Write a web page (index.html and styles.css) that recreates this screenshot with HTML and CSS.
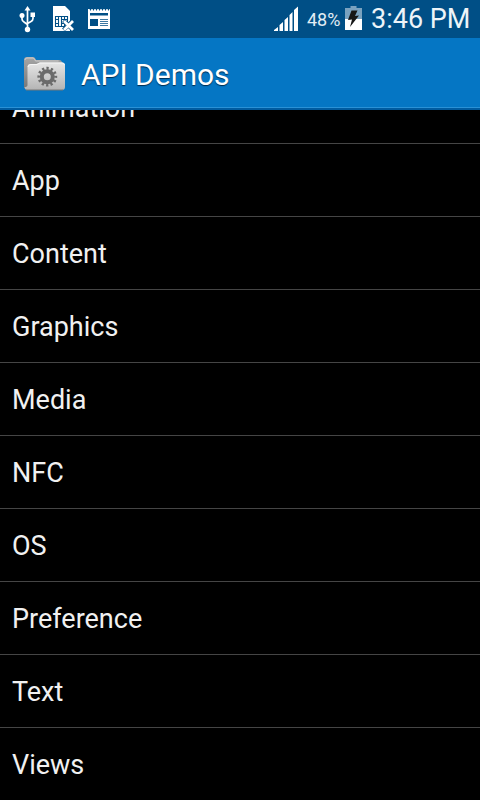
FILE: index.html
```html
<!DOCTYPE html>
<html lang="en">
<head>
<meta charset="utf-8">
<title>API Demos</title>
<link rel="stylesheet" href="styles.css">
</head>
<body>
<main class="screen">
  <header class="status">
    <div class="notifications">
      <svg class="icon-usb" width="18" height="28" viewBox="0 0 18 28" fill="#fff" stroke="#fff" stroke-width="1.700">
        <path d="M8.500 4v20M3 11v3q0 2 2 3l3.500 2.500M14 9v4.500q0 2-2 3l-3.500 2" fill="none"/>
        <path d="M8.500 1l3 4.500h-6z" stroke="none"/>
        <circle cx="3" cy="10.500" r="2.500" stroke="none"/>
        <path d="M11.500 7.500h4.500v4.500h-4.500z" stroke="none"/>
        <circle cx="8.500" cy="24.500" r="2.700" stroke="none"/>
      </svg>
      <svg class="icon-sim" width="23" height="28" viewBox="0 0 23 28">
        <path d="M1 1h12l5 5v20H1z" fill="#fff"/>
        <path d="M3.500 11.500h12v10h-12zM3.500 14.500h3M3.500 18.500h3M6.500 11.500v10M9.500 11.500v10M12.500 11.500v10M9.500 14.500h6M9.500 18.500h6" fill="none" stroke="#004f86" stroke-width="1.100"/>
        <path d="M11.500 15.500l9.500 9.500M21 15.500L11.500 25" stroke="#004f86" stroke-width="4"/>
        <path d="M12 16l9 9M21 16l-9 9" stroke="#fff" stroke-width="2.800"/>
      </svg>
      <svg class="icon-news" width="24" height="24" viewBox="0 0 24 24">
        <path d="M1 1h1.500l1 2 1-2h1l1 2 1-2h1l1 2 1-2h1l1 2 1-2h1l1 2 1-2h1l1 2 1-2h1l1 2 1-2H23v20H1z" fill="#fff"/>
        <path d="M3 5h18v2.500H3zM3 11h8v7H3z" fill="#004f86"/>
        <path d="M13 11.500h8M13 13.500h8M13 15.500h8M13 17.500h8" stroke="#3c78a2" stroke-width="1"/>
      </svg>
    </div>
    <div class="indicators">
      <svg class="icon-signal" width="26" height="26" viewBox="0 0 26 26" fill="#fff">
        <path d="M0 25v-1l4-3v4zM5.500 25v-6l3.500-3v9zM10.500 25V14l3.500-3v14zM15.500 25V9l3-3v19zM20 25V4l4-3.500V25z"/>
      </svg>
      <span class="percent">48%</span>
      <svg class="icon-battery" width="17" height="24" viewBox="0 0 17 24">
        <path d="M5.500 0h6v2H17v22H0V2h5.500z" fill="#7aa2bf"/>
        <path d="M0 13h17v11H0z" fill="#fff"/>
        <path d="M6.500 4.500h6L10 10l4-.5L5 21l2-7.500-4 .5z" fill="#161616"/>
      </svg>
      <time class="clock">3:46 PM</time>
    </div>
  </header>
  <div class="action-bar">
    <svg class="icon-folder" width="44" height="38" viewBox="0 0 44 38">
      <defs>
        <linearGradient id="front" x1="0" y1="0" x2="0" y2="1"><stop stop-color="#e6e6e6"/><stop offset="1" stop-color="#b4b4b4"/></linearGradient>
        <linearGradient id="back" x1="0" y1="0" x2="0" y2="1"><stop stop-color="#a6a6a6"/><stop offset="1" stop-color="#777"/></linearGradient>
      </defs>
      <path d="M1 5q0-3 3-3h6q2 0 3 3h23q3 0 3 3v26H3q-2 0-2-3z" fill="url(#back)"/>
      <path d="M2 5q0-2 2-2h6q1.500 0 2.500 3h23" fill="none" stroke="#ccc"/>
      <path d="M4.500 12q0-3 3-3h6l3-1.500h23q2.500 0 2.500 3V32q0 3-3 3H4q-2 0-2.500-3 3 0 3-2z" fill="url(#front)"/>
      <path d="M5 12q0-2.500 3-2.500h6L17 8h22q2 0 2.500 2" fill="none" stroke="#f5f5f5"/>
      <path d="M3 35h37" stroke="#777"/>
      <circle cx="24.300" cy="21.700" r="5.500" fill="none" stroke="#6b6b6b" stroke-width="4"/>
      <circle cx="24.300" cy="21.700" r="8.400" fill="none" stroke="#6b6b6b" stroke-width="3" stroke-dasharray="2.250 2.148" stroke-dashoffset="1.125"/>
    </svg>
    <h1 class="title">API Demos</h1>
  </div>
  <ul class="list">
    <li class="row">Animation</li>
    <li class="row">App</li>
    <li class="row">Content</li>
    <li class="row">Graphics</li>
    <li class="row">Media</li>
    <li class="row">NFC</li>
    <li class="row">OS</li>
    <li class="row">Preference</li>
    <li class="row">Text</li>
    <li class="row">Views</li>
  </ul>
</main>
</body>
</html>
```
FILE: styles.css
```css
* { box-sizing: border-box; }
body { margin: 0; background: #fff; font-family: Roboto, sans-serif; overflow: hidden; }
.screen { width: 480px; height: 800px; display: flex; flex-direction: column; background: #000; overflow: hidden; }
.status { height: 38px; flex: none; display: flex; justify-content: space-between; background: #004f86; color: #fff; }
.notifications, .indicators { display: flex; align-items: flex-start; }
.icon-usb { margin: 5px 0 0 19px; }
.icon-sim { margin: 5px 0 0 15px; }
.icon-news { margin: 8px 0 0 12px; }
.icon-signal { margin-top: 6px; }
.percent { margin: 9px 0 0 7px; width: 33px; font-size: 18px; line-height: 21px; color: #e2edf4; white-space: nowrap; }
.icon-battery { margin: 6px 0 0 5px; }
.clock { margin: 3px 0 0 9px; width: 109px; font-size: 27px; line-height: 32px; white-space: nowrap; color: #edf4f8; }
.action-bar { height: 72px; flex: none; display: flex; align-items: center; background: #0576c4; border-bottom: 2px solid #005ba0; box-shadow: inset 0 -1px #2a91d6; }
.icon-folder { margin: 2px 0 0 23px; }
.title { margin: 3px 0 0 14px; font-size: 30px; line-height: 36px; font-weight: 400; color: #fff; text-shadow: 0 1px 1px #002d50; }
.list { flex: 1; min-height: 0; margin: 0; padding: 0; list-style: none; overflow: hidden; display: flex; flex-direction: column; justify-content: flex-end; }
.row { height: 73px; flex: none; padding: 1px 12px 0; line-height: 72px; font-size: 27px; color: #f1f1f1; border-bottom: 1px solid #454545; }
.row:last-child { height: 72px; border: 0; }
```
